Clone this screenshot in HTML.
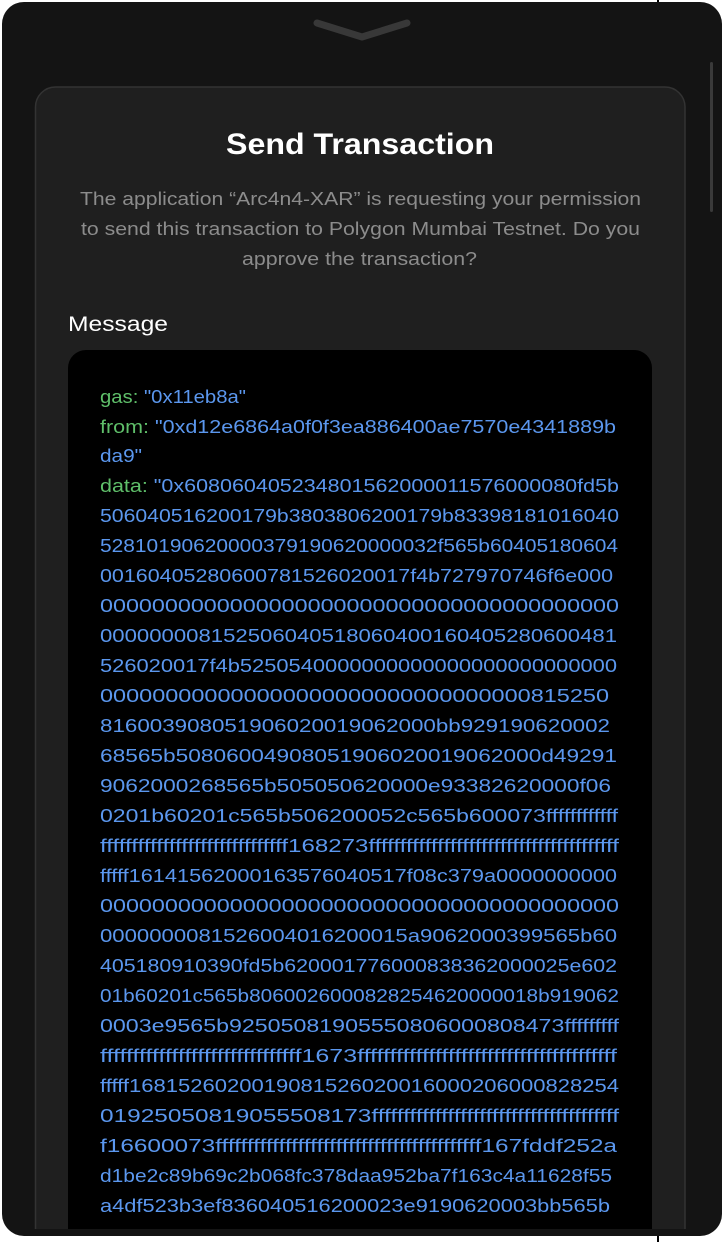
<!DOCTYPE html>
<html><head><meta charset="utf-8"><style>
html,body{margin:0;padding:0;background:#fff;width:724px;height:1242px;overflow:hidden}
svg{display:block}
text{font-family:"Liberation Sans",sans-serif}
.c{font-size:18px;fill:#5b97ee}
.k{fill:#5fbf6a}
</style></head><body>
<svg width="724" height="1242" viewBox="0 0 724 1242" xmlns="http://www.w3.org/2000/svg">
<rect x="0" y="0" width="724" height="1242" fill="#fff"/>
<line x1="658" y1="0" x2="658" y2="6" stroke="#000" stroke-width="2"/>
<line x1="658" y1="1232" x2="658" y2="1242" stroke="#000" stroke-width="2"/>
<rect x="2" y="2" width="720" height="1234" rx="22" fill="#141414"/>
<path d="M317 23 L362 37 L407 23" stroke="#383838" stroke-width="7" fill="none" stroke-linecap="round" stroke-linejoin="round"/>
<rect x="710" y="62" width="3" height="150" rx="1.5" fill="#3a3a3a"/>
<path d="M35.5 1229 V107 a20 20 0 0 1 20 -20 H665 a20 20 0 0 1 20 20 V1229" fill="#1f1f1f" stroke="#333" stroke-width="1.5"/>
<text x="360" y="154" text-anchor="middle" font-size="30" font-weight="bold" fill="#fff" textLength="268" lengthAdjust="spacingAndGlyphs">Send Transaction</text>
<g font-size="18" fill="#8c8c8c">
<text x="80" y="205" textLength="561" lengthAdjust="spacingAndGlyphs">The application “Arc4n4-XAR” is requesting your permission</text>
<text x="81" y="235" textLength="559" lengthAdjust="spacingAndGlyphs">to send this transaction to Polygon Mumbai Testnet. Do you</text>
<text x="242" y="265" textLength="235" lengthAdjust="spacingAndGlyphs">approve the transaction?</text>
</g>
<text x="68" y="331" font-size="21" fill="#fff" textLength="100" lengthAdjust="spacingAndGlyphs">Message</text>
<path d="M68 1229 V368 a18 18 0 0 1 18 -18 H634 a18 18 0 0 1 18 18 V1229 Z" fill="#000"/>
<g class="c">
<text x="100" y="403" textLength="146" lengthAdjust="spacingAndGlyphs"><tspan class="k">gas: </tspan>"0x11eb8a"</text>
<text x="100" y="433" textLength="516" lengthAdjust="spacingAndGlyphs"><tspan class="k">from: </tspan>"0xd12e6864a0f0f3ea886400ae7570e4341889b</text>
<text x="100" y="462" textLength="42" lengthAdjust="spacingAndGlyphs">da9"</text>
<text x="100" y="492" textLength="519" lengthAdjust="spacingAndGlyphs"><tspan class="k">data: </tspan>"0x608060405234801562000011576000080fd5b</text>
<text x="100" y="522" textLength="519" lengthAdjust="spacingAndGlyphs">506040516200179b3803806200179b83398181016040</text>
<text x="100" y="552" textLength="518" lengthAdjust="spacingAndGlyphs">52810190620000379190620000032f565b60405180604</text>
<text x="100" y="582" textLength="513" lengthAdjust="spacingAndGlyphs">00160405280600781526020017f4b727970746f6e000</text>
<text x="100" y="612" textLength="519" lengthAdjust="spacingAndGlyphs">0000000000000000000000000000000000000000</text>
<text x="100" y="642" textLength="517" lengthAdjust="spacingAndGlyphs">000000008152506040518060400160405280600481</text>
<text x="100" y="672" textLength="517" lengthAdjust="spacingAndGlyphs">526020017f4b5250540000000000000000000000000</text>
<text x="100" y="702" textLength="509" lengthAdjust="spacingAndGlyphs">000000000000000000000000000000000815250</text>
<text x="100" y="732" textLength="510" lengthAdjust="spacingAndGlyphs">816003908051906020019062000bb929190620002</text>
<text x="100" y="762" textLength="517" lengthAdjust="spacingAndGlyphs">68565b50806004908051906020019062000d49291</text>
<text x="100" y="792" textLength="511" lengthAdjust="spacingAndGlyphs">9062000268565b505050620000e93382620000f06</text>
<text x="100" y="822" textLength="518" lengthAdjust="spacingAndGlyphs">0201b60201c565b506200052c565b600073ffffffffffff</text>
<text x="100" y="852" textLength="519" lengthAdjust="spacingAndGlyphs">ffffffffffffffffffffffffffffff168273ffffffffffffffffffffffffffffffffffffffff</text>
<text x="100" y="882" textLength="517" lengthAdjust="spacingAndGlyphs">fffff16141562000163576040517f08c379a0000000000</text>
<text x="100" y="912" textLength="519" lengthAdjust="spacingAndGlyphs">0000000000000000000000000000000000000000</text>
<text x="100" y="942" textLength="517" lengthAdjust="spacingAndGlyphs">0000000081526004016200015a9062000399565b60</text>
<text x="100" y="972" textLength="517" lengthAdjust="spacingAndGlyphs">405180910390fd5b620001776000838362000025e602</text>
<text x="100" y="1002" textLength="519" lengthAdjust="spacingAndGlyphs">01b60201c565b8060026000828254620000018b919062</text>
<text x="100" y="1032" textLength="519" lengthAdjust="spacingAndGlyphs">0003e9565b92505081905550806000808473fffffffff</text>
<text x="100" y="1062" textLength="517" lengthAdjust="spacingAndGlyphs">fffffffffffffffffffffffffffffff1673ffffffffffffffffffffffffffffffffffffffff</text>
<text x="100" y="1092" textLength="519" lengthAdjust="spacingAndGlyphs">fffff1681526020019081526020016000206000828254</text>
<text x="100" y="1122" textLength="519" lengthAdjust="spacingAndGlyphs">01925050819055508173fffffffffffffffffffffffffffffffffffffff</text>
<text x="100" y="1152" textLength="517" lengthAdjust="spacingAndGlyphs">f16600073ffffffffffffffffffffffffffffffffffffffffff167fddf252a</text>
<text x="100" y="1182" textLength="512" lengthAdjust="spacingAndGlyphs">d1be2c89b69c2b068fc378daa952ba7f163c4a11628f55</text>
<text x="100" y="1212" textLength="510" lengthAdjust="spacingAndGlyphs">a4df523b3ef836040516200023e9190620003bb565b</text>
</g>
</svg>
</body></html>
